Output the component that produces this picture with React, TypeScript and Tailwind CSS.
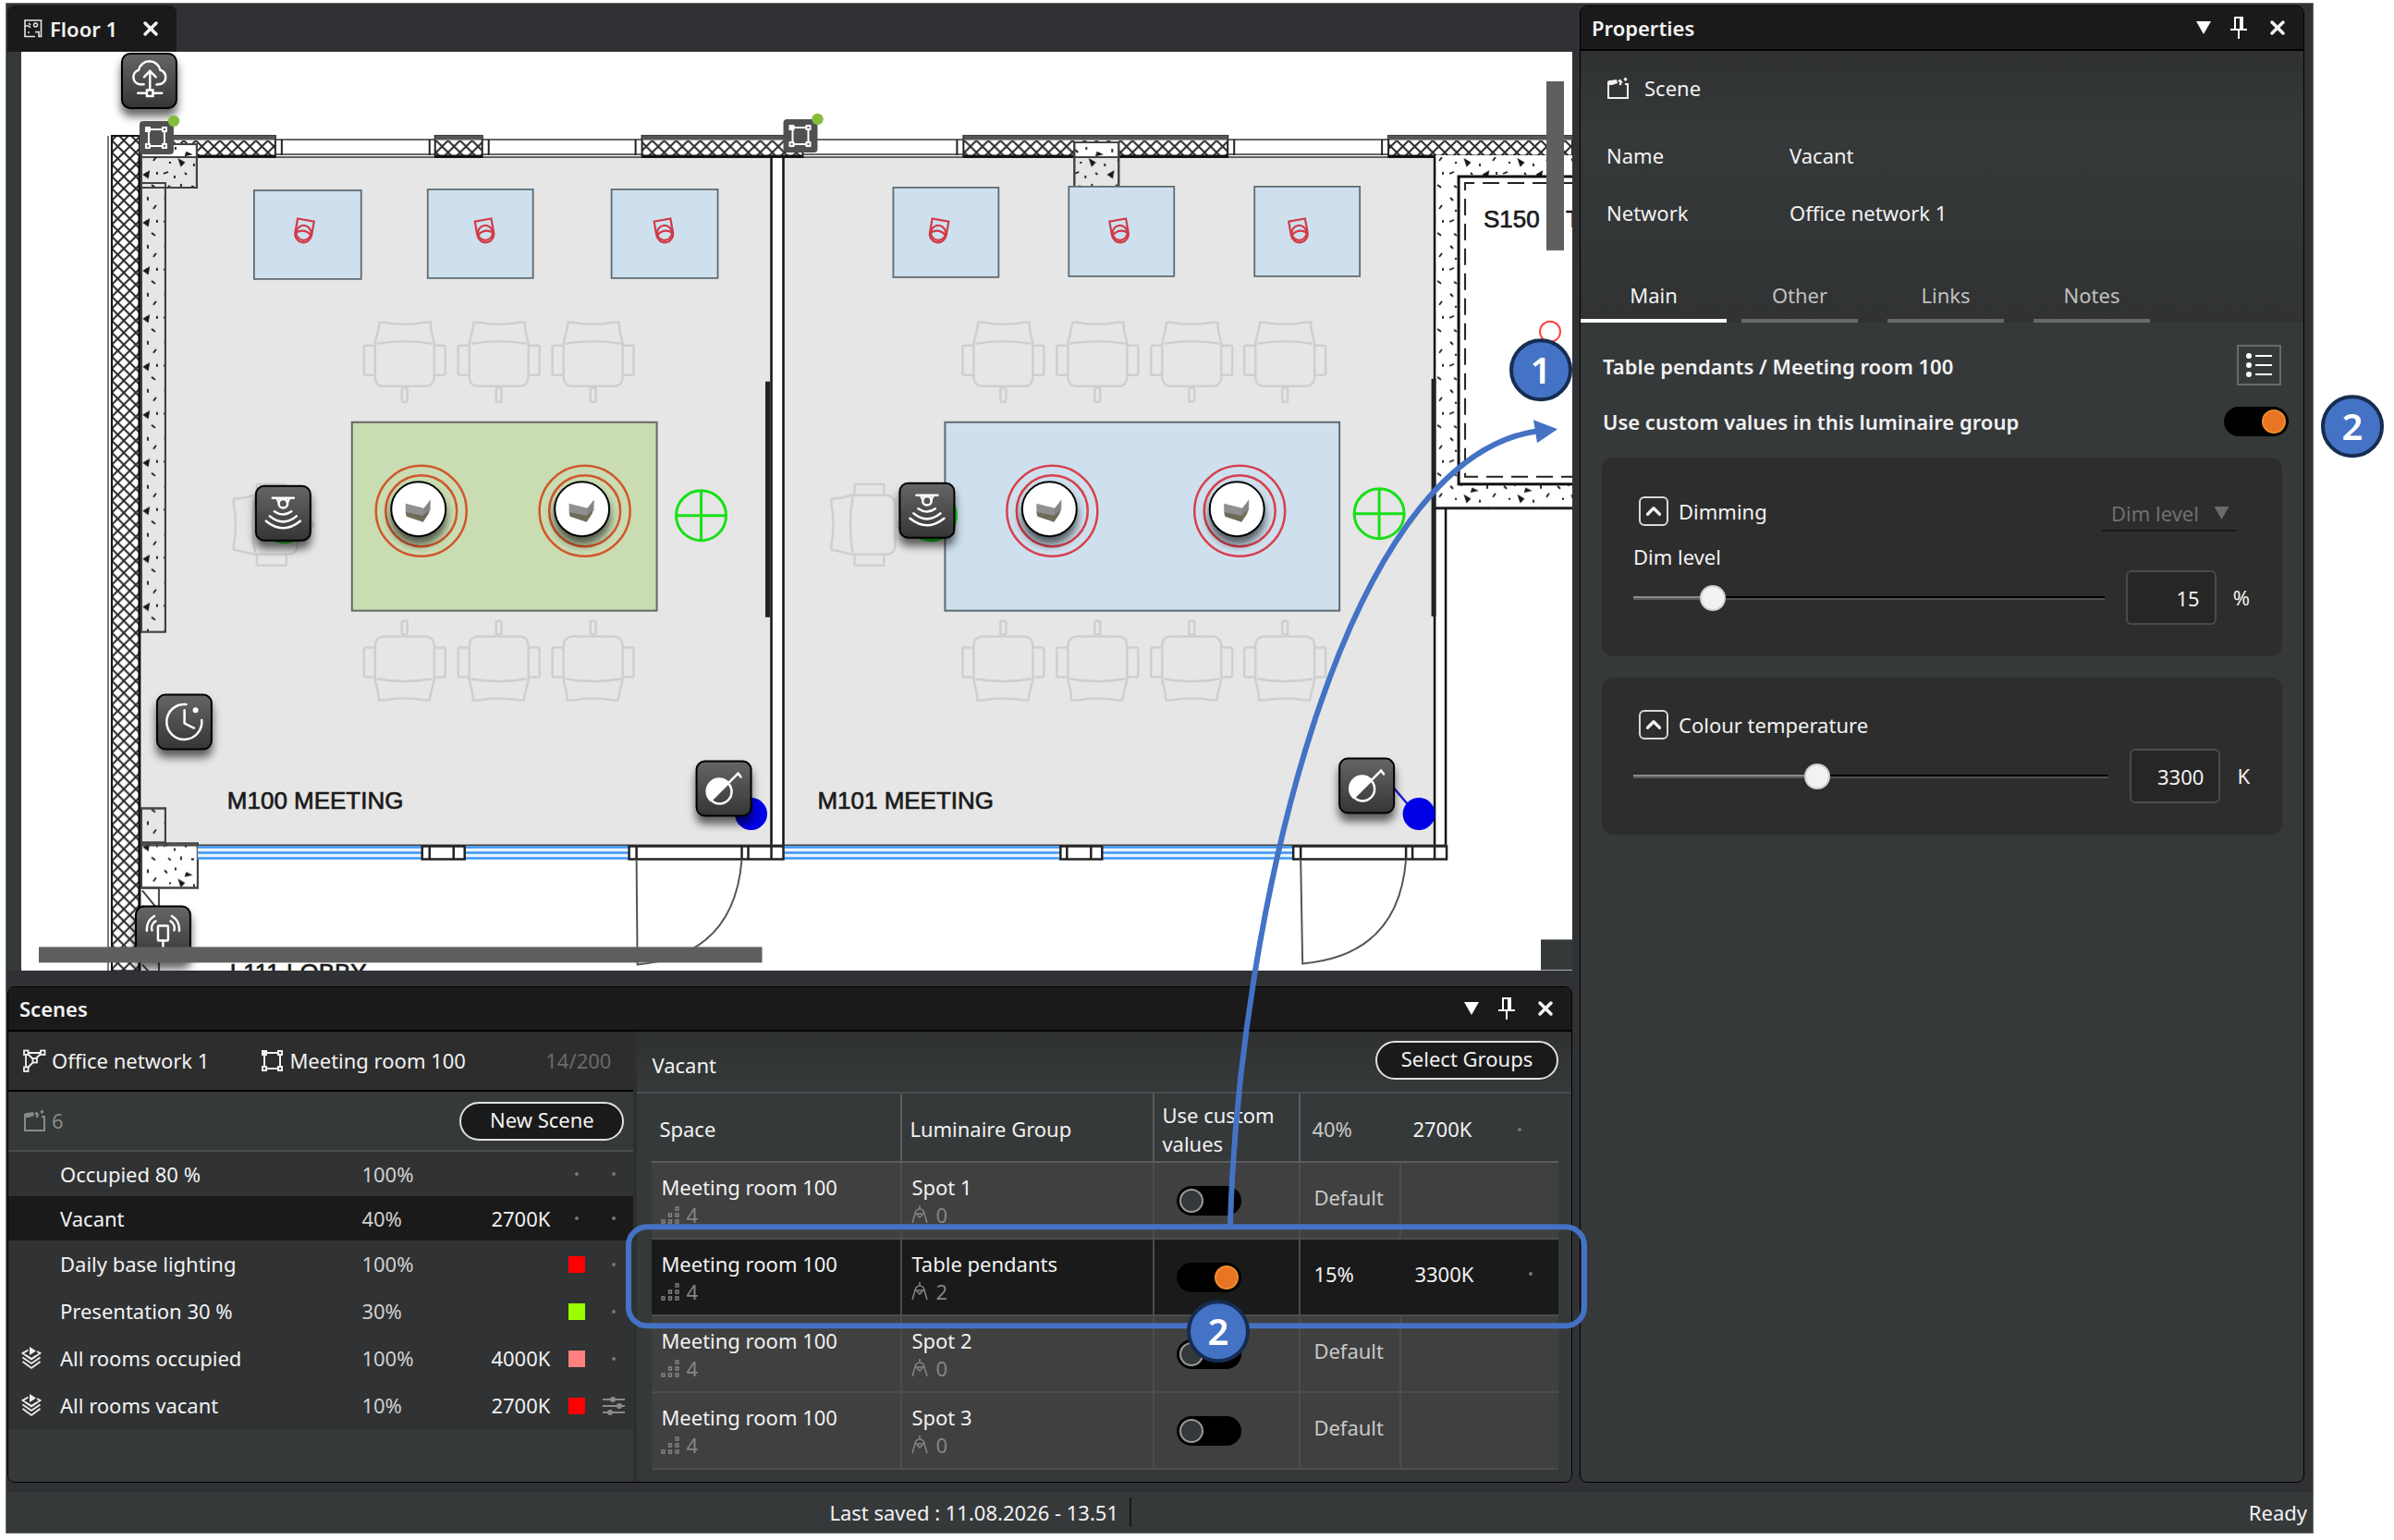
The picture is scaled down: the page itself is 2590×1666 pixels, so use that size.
import React, { useState } from "react";
import { ChevronUp, X } from "lucide-react";

type SceneRow = {
  name: string;
  dim: string;
  temp?: string;
  color?: string;
  shared?: boolean;
  tuned?: boolean;
  height: string;
};

const scenes: SceneRow[] = [
  { name: "Occupied 80 %", dim: "100%", height: "h-12" },
  { name: "Vacant", dim: "40%", temp: "2700K", height: "h-12" },
  { name: "Daily base lighting", dim: "100%", color: "bg-[#ff0000]", height: "h-[51px]" },
  { name: "Presentation 30 %", dim: "30%", color: "bg-[#99ff00]", height: "h-[51px]" },
  { name: "All rooms occupied", dim: "100%", temp: "4000K", color: "bg-[#ff8080]", shared: true, height: "h-[51px]" },
  { name: "All rooms vacant", dim: "10%", temp: "2700K", color: "bg-[#ff0000]", shared: true, tuned: true, height: "h-[51px]" },
];

const groups = [
  { name: "Spot 1", count: 0 },
  { name: "Table pendants", count: 2, dim: "15%", temp: "3300K" },
  { name: "Spot 2", count: 0 },
  { name: "Spot 3", count: 0 },
];

/* ---------- small icons ---------- */

function FloorIcon() {
  return (
    <svg width="20" height="20" viewBox="0 0 20 20" fill="none" stroke="#e8e8e8" strokeWidth="1.600">
      <path d="M12 18.500H1V1h17.500v17.500H16v-5h-3v1" />
      <path d="M1 7h4l2 2M5 4l2 2M5 13v2" strokeWidth="1.500" />
      <circle cx="12.500" cy="6" r="2" strokeWidth="1.500" />
    </svg>
  );
}

function PinIcon() {
  return (
    <svg width="20" height="26" viewBox="0 0 20 26" fill="none" stroke="white" strokeWidth="2">
      <path d="M6 15V2h8v13M1 15h18M10 15v10" />
      <path d="M12.500 2v13" strokeWidth="3" />
    </svg>
  );
}

function AreaIcon() {
  return (
    <svg width="25" height="25" viewBox="0 0 25 25" fill="none" stroke="currentColor" strokeWidth="2">
      <path d="M6 4h13M6 21h13M4 6v13M21 6v13" />
      <rect x="2" y="2" width="4" height="4" fill="currentColor" />
      <rect x="19" y="2" width="4" height="4" />
      <rect x="2" y="19" width="4" height="4" />
      <rect x="19" y="19" width="4" height="4" />
    </svg>
  );
}

function NetworkIcon() {
  return (
    <svg width="25" height="25" viewBox="0 0 25 25" fill="none" stroke="currentColor" strokeWidth="1.800">
      <path d="M5 4h14M3 6v13M19 5l-5 5M5 5l6 6M11 14l-6 6" />
      <rect x="1" y="1.500" width="4.500" height="4.500" />
      <rect x="19" y="1.500" width="4.500" height="4.500" />
      <rect x="10.500" y="10" width="4.500" height="4.500" />
      <rect x="1" y="19.500" width="4.500" height="4.500" />
    </svg>
  );
}

function SceneIcon() {
  return (
    <svg width="25" height="25" viewBox="0 0 25 25" fill="none" stroke="currentColor" strokeWidth="2">
      <path d="M2 6v17h21V8h-3" />
      <path d="M1 6q0-2 3-2l7-1 1 4-6 2H1z" fill="currentColor" stroke="none" />
      <path d="M13.500 3.500l3 3.500M19.500 1.500l2 2.500" strokeWidth="3" />
      <path d="M14 8.500l2-1" />
    </svg>
  );
}

function LayersIcon() {
  return (
    <svg width="22" height="25" viewBox="0 0 22 25" fill="none" stroke="#f0f0f0" strokeWidth="1.800">
      <path d="M7.500 3.500L1.500 7l9.500 6.500L20.500 7 17 5" />
      <path d="M1.500 11.500L11 18l9.500-6.500M1.500 16L11 23l9.500-7M5.500 9.500L11 13l5.500-3.500" />
      <path d="M9 0l7 4.500L9 9z" fill="#f0f0f0" stroke="none" />
    </svg>
  );
}

function TuneIcon() {
  return (
    <svg width="24" height="20" viewBox="0 0 24 20" stroke="#8a8a8a" strokeWidth="2" fill="#8a8a8a">
      <path d="M0 3h24M0 10h24M0 17h24" />
      <circle cx="11" cy="3" r="2" />
      <circle cx="18" cy="10" r="2" />
      <circle cx="8" cy="17" r="2" />
    </svg>
  );
}

function DevicesIcon() {
  return (
    <svg width="21" height="19" viewBox="0 0 21 19" fill="none" stroke="#858585" strokeWidth="1.300">
      <path d="M1 15h3v3H1zM8.500 15h3v3h-3zM16 15h3v3h-3zM8.500 8h3v3h-3zM16 8h3v3h-3zM16 1h3v3h-3z" />
    </svg>
  );
}

function PendantIcon() {
  return (
    <svg width="18" height="20" viewBox="0 0 18 20" fill="none" stroke="#858585" strokeWidth="1.500">
      <path d="M9 0v4M4 9a5 5 0 0 1 10 0zM4 9L1 19M14 9l3 10" />
      <path d="M6 10l3 3 3-3" />
    </svg>
  );
}

function ListIcon() {
  return (
    <svg width="30" height="26" viewBox="0 0 30 26" stroke="white" strokeWidth="2" fill="white">
      <path d="M11 3h18M11 13h18M11 23h18" />
      <circle cx="4" cy="3" r="2" />
      <circle cx="4" cy="13" r="2" />
      <circle cx="4" cy="23" r="2" />
    </svg>
  );
}

/* ---------- controls ---------- */

function Toggle({ label, defaultChecked }: { label: string; defaultChecked?: boolean }) {
  return (
    <input
      type="checkbox"
      role="switch"
      aria-label={label}
      defaultChecked={defaultChecked}
      className="block h-8 w-[70px] shrink-0 cursor-pointer appearance-none rounded-full bg-black p-[3px] before:block before:size-[26px] before:rounded-full before:border-2 before:border-[#9a9a9a] before:bg-[#33383a] checked:before:ml-auto checked:before:border-[#f08c2e] checked:before:bg-[#e87424]"
    />
  );
}

function Slider({ id, min, max, value, onChange }: { id: string; min: number; max: number; value: number; onChange: (v: number) => void }) {
  const filled = ((value - min) / (max - min)) * 100;
  return (
    <div className="relative flex h-8 flex-1 items-center">
      <div className="absolute inset-x-0 h-1 border-t-2 border-black bg-[#505050]" />
      <div className="absolute left-0 h-1 border-t-2 border-[#8a8a8a] bg-[#5a5a5a]" style={{ width: `${filled}%` }} />
      <input
        id={id}
        type="range"
        min={min}
        max={max}
        value={value}
        aria-label={id}
        onChange={(e) => onChange(Number(e.target.value))}
        className="relative h-8 w-full cursor-pointer appearance-none bg-transparent [&::-webkit-slider-thumb]:size-7 [&::-webkit-slider-thumb]:appearance-none [&::-webkit-slider-thumb]:rounded-full [&::-webkit-slider-thumb]:border-2 [&::-webkit-slider-thumb]:border-[#cfcfcf] [&::-webkit-slider-thumb]:bg-[#f2f2f2]"
      />
    </div>
  );
}

function NumberBox({ label, value, onChange }: { label: string; value: number; onChange: (v: number) => void }) {
  return (
    <input
      type="text"
      aria-label={label}
      value={value}
      onChange={(e) => onChange(Number(e.target.value) || 0)}
      className="h-[59px] w-[98px] rounded-md border-2 border-[#4b4b4b] bg-[#262626] pr-4 text-right"
    />
  );
}

function PanelHeader({ title }: { title: string }) {
  return (
    <header className="flex h-12 items-center border-b-2 border-black bg-[#1a1a1a] pr-4 pl-3">
      <h2 className="flex-1 text-[22px] font-semibold">{title}</h2>
      <button aria-label="Window menu" className="mr-5">
        <svg width="16" height="14" viewBox="0 0 16 14" fill="white">
          <path d="M0 0h16L8 14z" />
        </svg>
      </button>
      <button aria-label="Pin" className="mr-5">
        <PinIcon />
      </button>
      <button aria-label="Close">
        <X size={24} strokeWidth={3.5} />
      </button>
    </header>
  );
}

/* ---------- floor plan ---------- */

function Device({ x, y, children }: { x: number; y: number; children: React.ReactNode }) {
  return (
    <g transform={`translate(${x} ${y})`}>
      <rect x="1" y="1" width="59" height="59" rx="9" fill="url(#device)" stroke="black" strokeWidth="2" filter="url(#shadow)" />
      <g fill="none" stroke="white" strokeWidth="2.500" strokeLinecap="round">
        {children}
      </g>
    </g>
  );
}

function SensorGlyph() {
  return (
    <>
      <path d="M19 14h23M24 15l2 4M37 15l-2 4M21 28.500q9.500 6.500 18.500 0M16 33.700q14.500 12 29 0M12 39q18.500 15 37 0" />
      <circle cx="30.500" cy="20" r="4.800" />
    </>
  );
}

function SwitchGlyph() {
  return (
    <>
      <circle cx="26" cy="34" r="13" />
      <path d="M16 43A13 13 0 0 1 35 24z" fill="white" />
      <path d="M17 43L46 14l3 4" />
    </>
  );
}

function AreaMarker({ x, y }: { x: number; y: number }) {
  return (
    <g transform={`translate(${x} ${y})`}>
      <rect width="37" height="36" rx="4" fill="#505050" />
      <g fill="#505050" stroke="white" strokeWidth="2">
        <path d="M10 9h17v18H10z" />
        <rect x="7" y="7" width="4" height="4" fill="white" />
        <rect x="25" y="7" width="4" height="4" />
        <rect x="7" y="25" width="4" height="4" />
        <rect x="25" y="25" width="4" height="4" />
      </g>
      <circle cx="37" cy="0" r="6.200" fill="#86bc3c" />
    </g>
  );
}

function Chair({ x, y, rotate = 0 }: { x: number; y: number; rotate?: number }) {
  return (
    <g transform={`translate(${x} ${y}) rotate(${rotate})`} fill="#e6e6e6" stroke="#cfcfcf" strokeWidth="2.500">
      <rect x="-44" y="-17" width="13" height="32" rx="2" />
      <rect x="31" y="-17" width="13" height="32" rx="2" />
      <path d="M-27-42h5q22 4 44 0h6l1 10 3 12v38q-1 9-10 9h-44q-9 0-10-9v-38l3-12z" />
      <path d="M-30-19q30-5 60 0" fill="none" />
      <rect x="-3" y="29" width="6" height="15" rx="2" />
    </g>
  );
}

function Spot({ x, flip }: { x: number; flip?: boolean }) {
  return (
    <g transform={`translate(${x} 250) rotate(${flip ? -10 : 10})`} fill="none" stroke="#d23a48" strokeWidth="2.200">
      <path d="M-9 3v-15H9V3a9 9.500 0 0 1-18 0z" />
      <circle cx="0" cy="2" r="8" />
      <path d="M-8 3q8-6 16 0" />
    </g>
  );
}

function Luminaire({ x, y, color }: { x: number; y: number; color: string }) {
  return (
    <g transform={`translate(${x} ${y})`}>
      <circle cx="3" cy="2" r="49" fill="none" stroke={color} strokeWidth="2.500" />
      <circle cx="3" cy="2" r="38.500" fill="none" stroke={color} strokeWidth="2.500" />
      <circle r="29.500" fill="white" stroke="black" strokeWidth="2" filter="url(#shadow)" />
      <path d="M-14-6L6-1l7-9v11l-7 7-20-5z" fill="#909090" />
      <path d="M6-1l7-9-2 13-7 9z" fill="#858585" />
      <path d="M-14 3L5 7l7-6-1 4-6 9-18-6z" fill="#6f6a58" />
    </g>
  );
}

function Crosshair({ x, y }: { x: number; y: number }) {
  return (
    <g transform={`translate(${x} ${y})`} fill="none" stroke="#16e016" strokeWidth="3">
      <circle r="27" />
      <path d="M-27 0h54M0-27v54" />
    </g>
  );
}

function FloorPlan() {
  return (
    <svg
      viewBox="23 56 1679 995"
      className="block w-full bg-white"
      role="img"
      aria-label="Floor 1 plan"
      fontFamily='"Liberation Sans", sans-serif'
    >
      <defs>
        <pattern id="hatch" x="121" y="152" width="13" height="13" patternUnits="userSpaceOnUse">
          <path d="M0 0l13 13M13 0L0 13" stroke="#2a2a2a" strokeWidth="2" />
        </pattern>
        <pattern id="stone" width="58" height="52" patternUnits="userSpaceOnUse">
          <path
            d="M4 6l3 3M16 3v3M28 9l4 2-5 1zM44 5v4M53 14l-3 4M9 20h2M20 17l2 6 3-3zM36 21v3M3 32l5-2M15 34v3M26 31l2 2M40 33l5-3-1 6zM54 30v3M8 45l3 2M22 43v4M33 46h3M48 44l4 3"
            stroke="#161616"
            strokeWidth="1.800"
            fill="#161616"
          />
        </pattern>
        <linearGradient id="device" x1="0" y1="0" x2="0" y2="1">
          <stop offset="0" stopColor="#666" />
          <stop offset="1" stopColor="#353535" />
        </linearGradient>
        <filter id="shadow" x="-30%" y="-30%" width="160%" height="180%">
          <feDropShadow dx="0" dy="8" stdDeviation="5" floodOpacity="0.6" />
        </filter>
      </defs>

      {/* rooms */}
      <path d="M153 170h682v745H153zM848 170h705v745H848z" fill="#e6e6e6" />

      {/* outer walls */}
      <path d="M117 147v904" stroke="#777" strokeWidth="2" />
      <rect x="121" y="147" width="30" height="904" fill="url(#hatch)" stroke="#111" strokeWidth="2" />
      <path d="M151 170v881" stroke="#111" strokeWidth="3" />
      <path d="M298 151h1404M298 167h1404" stroke="#666" strokeWidth="2" />
      <path d="M298 170h1255" stroke="#333" strokeWidth="1.500" />
      {[
        [151, 147],
        [471, 51],
        [695, 174],
        [1043, 286],
        [1503, 199],
      ].map(([x, w]) => (
        <g key={x}>
          <rect x={x} y="147" width={w} height="23" fill="white" />
          <rect x={x} y="152" width={w} height="17" fill="url(#hatch)" />
          <rect x={x} y="147" width={w} height="23" fill="none" stroke="#222" strokeWidth="2" />
          <path d={`M${x} 149h${w}`} stroke="#555" strokeWidth="5" />
          <path d={`M${x} 169h${w}`} stroke="#111" strokeWidth="3" />
        </g>
      ))}
      <path d="M305 151v17M465 151v17M529 151v17M688 151v17M1036 151v17M1336 151v17M1496 151v17" stroke="#222" strokeWidth="2" />

      {/* stone columns */}
      <g stroke="#444" strokeWidth="2">
        <path d="M153 198h26v486h-26zM153 875h26v37h-26z" fill="#e6e6e6" />
        <path d="M153 170h60v33h-60zM1163 170h48v32h-48z" fill="#e6e6e6" />
        <path d="M153 156h60v14h-60zM1163 154h48v16h-48zM153 913h61v48h-61z" fill="white" />
        <path d="M153 198h26v486h-26zM153 875h26v37h-26zM153 156h60v47h-60zM153 913h61v48h-61zM1163 154h48v48h-48z" fill="url(#stone)" />
        <path d="M154 961h18v100M154 964l18 22M154 980l12 14M154 1044l18 20" fill="none" />
      </g>

      {/* shaft on the right */}
      <path d="M1554 168h148v381h-148z" fill="white" />
      <path d="M1554 170h148v21h-123v333h123v25h-148z" fill="url(#stone)" />
      <path d="M1704 191h-125v333h125" fill="none" stroke="#111" strokeWidth="3" />
      <path d="M1704 198h-118v318h118" fill="none" stroke="#222" strokeWidth="2" strokeDasharray="18 9" />
      <path d="M1553 550h149" stroke="#222" strokeWidth="3" />
      <path d="M835 170v760M848 170v760M1553 170v760M1565 550v380" stroke="#111" strokeWidth="2.500" />
      <path d="M831 413v255M1552 410v257" stroke="#222" strokeWidth="5" />

      {/* glazing and doors */}
      <path d="M153 915h1413" stroke="#444" strokeWidth="2" />
      <rect x="214" y="916" width="635" height="14" fill="#e8f3ff" />
      <rect x="849" y="916" width="716" height="14" fill="#e8f3ff" />
      <path d="M214 917h467M214 923h467M214 929h467M849 917h551M849 923h551M849 929h551" stroke="#3c96f5" strokeWidth="2.500" />
      <path
        d="M457 916h46v14h-46zM465 916v14M491 916v14M681 916h167v14h-167zM689 916v14M803 916v14M810 916v14M835 916v14M1148 916h45v14h-45zM1155 916v14M1181 916v14M1400 916h166v14h-166zM1408 916v14M1522 916v14M1529 916v14M1553 916v14"
        fill="white"
        stroke="#222"
        strokeWidth="2.500"
      />
      <path d="M689 930l1 114q105-9 113-114M1408 930l2 113q104-9 112-113" fill="none" stroke="#555" strokeWidth="2" />

      {/* furniture */}
      <g fill="#cee0ed" stroke="#5f6a72" strokeWidth="1.800">
        <path d="M275 206h116v96H275zM463 205h114v96H463zM662 205h115v96H662zM967 203h114v97H967zM1157 202h114v97h-114zM1358 202h114v97h-114z" />
      </g>
      {[438, 540, 642, 1086, 1188, 1290, 1391].map((x) => (
        <React.Fragment key={x}>
          <Chair x={x} y={391} />
          <Chair x={x} y={716} rotate={180} />
        </React.Fragment>
      ))}
      <Chair x={295} y={568} rotate={-90} />
      <Chair x={942} y={568} rotate={-90} />
      <rect x="381" y="457" width="330" height="204" fill="#c9dcb2" stroke="#666" strokeWidth="2" />
      <rect x="1023" y="457" width="427" height="204" fill="#cee0ed" stroke="#5f6a72" strokeWidth="2" />
      <Spot x={329} />
      <Spot x={525} flip />
      <Spot x={719} flip />
      <Spot x={1016} />
      <Spot x={1212} flip />
      <Spot x={1406} flip />

      <g fontSize="26" fill="#1a1a1a" stroke="#1a1a1a" strokeWidth="0.700">
        <text x="246" y="875">M100 MEETING</text>
        <text x="885" y="875">M101 MEETING</text>
        <text x="1606" y="246">S150</text>
        <text x="1695" y="246">T</text>
        <text x="249" y="1062">L111 LOBBY</text>
      </g>

      <Luminaire x={453} y={551} color="#d2562b" />
      <Luminaire x={630} y={551} color="#d2562b" />
      <Luminaire x={1136} y={551} color="#d8404e" />
      <Luminaire x={1339} y={551} color="#d8404e" />
      <Crosshair x={759} y={558} />
      <Crosshair x={1493} y={556} />
      <Crosshair x={308} y={560} />
      <Crosshair x={1008} y={558} />
      <circle cx="1678" cy="359" r="11" fill="none" stroke="#ff4040" strokeWidth="2" />
      <path d="M1508 852l24 28" stroke="#1c1cd8" strokeWidth="2.500" />
      <circle cx="813" cy="881" r="17.500" fill="#0000e6" />
      <circle cx="1536" cy="881" r="17.500" fill="#0000e6" />

      {/* devices */}
      <Device x={131} y={57}>
        <path d="M24.700 34.300H20a8 8 0 0 1-1-15.500 12 12 0 0 1 23.500 0 8 8 0 0 1 1 15l-5 .8" />
        <path d="M31.300 39.700v-20M25 26.300l6.300-6.600 6.400 6.600M18.300 43.700h9.400M35 43.700h9.300" />
        <rect x="28" y="40.500" width="6.500" height="6.500" />
      </Device>
      <Device x={276} y={525}>
        <SensorGlyph />
      </Device>
      <Device x={973} y={522}>
        <SensorGlyph />
      </Device>
      <Device x={169} y={751}>
        <path d="M32.500 11.500A19 19 0 1 0 49.300 28.500" />
        <path d="M30.700 17.700V32l10.300 5" />
        <circle cx="42.700" cy="17.700" r="1.800" fill="white" />
      </Device>
      <Device x={753} y={823}>
        <SwitchGlyph />
      </Device>
      <Device x={1449} y={820}>
        <SwitchGlyph />
      </Device>
      <Device x={146} y={980}>
        <rect x="25" y="22" width="11" height="16" rx="1" />
        <path d="M30.500 38v7M22.500 17a9 9 0 0 0-4 10M21 11.500a17 17 0 0 0-8 16M38.500 17a9 9 0 0 1 4 10M40 11.500a17 17 0 0 1 8 16" />
      </Device>
      <AreaMarker x={151} y={131} />
      <AreaMarker x={848} y={129} />

      {/* scroll bars */}
      <rect x="42" y="1025" width="783" height="17" fill="#5f5f5f" />
      <rect x="1674" y="88" width="19" height="183" fill="#5f5f5f" />
      <rect x="1668" y="1017" width="34" height="33" fill="#36393a" />
    </svg>
  );
}

/* ---------- panels ---------- */

function ScenesPanel() {
  const [selected, setSelected] = useState("Vacant");

  return (
    <section className="mt-[17px] overflow-hidden rounded-lg border border-black bg-[#36393a]">
      <PanelHeader title="Scenes" />
      <div className="flex gap-1 bg-[#2d2f30]">
        <div className="w-2/5 bg-[#36393a]">
          <div className="flex h-[65px] items-center border-b-2 border-black bg-[#2d2d2d] pr-6 pl-4">
            <NetworkIcon />
            <span className="ml-1.5">Office network 1</span>
            <span className="ml-14 flex flex-1 items-center gap-1.5">
              <AreaIcon />
              Meeting room 100
            </span>
            <span className="text-[#6a6a6a]">14/200</span>
          </div>
          <div className="flex h-[65px] items-center border-b-2 border-[#4a4c4e] pr-2.5 pl-4 text-[#8a8a8a]">
            <SceneIcon />
            <span className="ml-1.5 flex-1">6</span>
            <button className="h-[42px] w-[178px] rounded-full border-2 border-[#e0e0e0] bg-[#1a1a1a] pb-0.5 text-[22px] text-[#f2f2f2]">
              New Scene
            </button>
          </div>
          <ul className="bg-[#303233]">
            {scenes.map((s) => (
              <li key={s.name}>
                <button
                  onClick={() => setSelected(s.name)}
                  className={`flex w-full items-center text-left ${s.height} ${selected === s.name ? "bg-[#1a1a1a]" : ""}`}
                >
                  <span className="w-14 pl-3.5">{s.shared && <LayersIcon />}</span>
                  <span className="flex-1">{s.name}</span>
                  <span className="w-[120px] text-[#d0d0d0]">{s.dim}</span>
                  <span className="w-[84px] text-right">{s.temp}</span>
                  <span className="flex w-[58px] justify-center">
                    {s.color ? <i className={`size-[18px] ${s.color}`} /> : <i className="size-1 rounded-full bg-[#777]" />}
                  </span>
                  <span className="flex w-8 justify-center pr-2.5">
                    {s.tuned ? (
                      <span className="shrink-0">
                        <TuneIcon />
                      </span>
                    ) : (
                      <i className="size-1 rounded-full bg-[#777]" />
                    )}
                  </span>
                </button>
              </li>
            ))}
          </ul>
        </div>

        <div className="flex-1 bg-[#36393a] pb-[13px]">
          <div className="flex h-[67px] items-center border-b-2 border-[#4a4c4e] bg-linear-to-b from-[#2f3131] to-[#36393a] pr-3.5 pl-4">
            <span className="flex-1 pt-2">Vacant</span>
            <button className="mb-1 h-[42px] w-[198px] rounded-full border-2 border-[#e0e0e0] bg-[#1a1a1a] pb-0.5 text-[22px]">
              Select Groups
            </button>
          </div>
          <div className="pr-3.5 pl-4">
            <table className="w-full table-fixed border-separate border-spacing-0 text-left">
              <colgroup>
                <col className="w-[271px]" />
                <col className="w-[273px]" />
                <col className="w-[158px]" />
                <col className="w-[109px]" />
                <col />
              </colgroup>
              <thead>
                <tr className="h-[75px] *:border-b-2 *:border-[#5a5c5e] *:p-0 *:font-normal">
                  <th className="border-r-2">
                    <span className="block pt-1 pl-2">Space</span>
                  </th>
                  <th className="border-r-2">
                    <span className="block pt-1 pl-2">Luminaire Group</span>
                  </th>
                  <th className="border-r-2">
                    <span className="block pt-1 pl-2 leading-[31px]">Use custom values</span>
                  </th>
                  <th className="text-[#c8c8c8]">
                    <span className="block pt-1 pl-3">40%</span>
                  </th>
                  <th>
                    <span className="flex items-center justify-between pt-1 pr-10 pl-3">
                      2700K
                      <i className="size-1 rounded-full bg-[#777]" />
                    </span>
                  </th>
                </tr>
              </thead>
              <tbody>
                {groups.map((g) => (
                  <tr
                    key={g.name}
                    className={`h-[83px] *:border-b-2 *:border-[#4c4c4c] *:p-0 *:align-top ${g.dim ? "bg-[#1a1a1a]" : "bg-[#404040]"}`}
                  >
                    <td className="border-r-2">
                      <div className="pt-[11px] pl-2.5 leading-[30px]">Meeting room 100</div>
                      <div className="flex items-center gap-1.5 pl-2.5 leading-[30px] text-[#858585]">
                        <DevicesIcon />4
                      </div>
                    </td>
                    <td className="border-r-2">
                      <div className="pt-[11px] pl-2.5 leading-[30px]">{g.name}</div>
                      <div className="flex items-center gap-2 pl-2.5 leading-[30px] text-[#858585]">
                        <PendantIcon />
                        {g.count}
                      </div>
                    </td>
                    <td className="border-r-2">
                      <div className="pt-[25px] pl-6">
                        <Toggle label={`Use custom values in ${g.name}`} defaultChecked={!!g.dim} />
                      </div>
                    </td>
                    <td className={g.dim ? "" : "border-r-2 text-[#c8c8c8]"}>
                      <div className="pt-[22px] pl-3.5 leading-[30px]">{g.dim ?? "Default"}</div>
                    </td>
                    <td>
                      {g.temp && (
                        <div className="flex items-center justify-between pt-[22px] pr-7 pl-3.5 leading-[30px]">
                          {g.temp}
                          <i className="size-1 rounded-full bg-[#777]" />
                        </div>
                      )}
                    </td>
                  </tr>
                ))}
              </tbody>
            </table>
          </div>
        </div>
      </div>
    </section>
  );
}

function PropertiesPanel() {
  const [tab, setTab] = useState("Main");
  const [dim, setDim] = useState(15);
  const [temp, setTemp] = useState(3300);

  return (
    <aside className="w-[784px] shrink-0 overflow-hidden rounded-lg border border-black bg-[#36393a]">
      <PanelHeader title="Properties" />
      <div className="bg-linear-to-b from-[#2f3131] via-[#36393a] via-30% to-[#303233]">
        <div className="px-7 pt-[25px]">
          <div className="flex h-[30px] items-center gap-4">
            <SceneIcon />
            Scene
          </div>
          <dl className="mt-[43px] grid grid-cols-[198px_1fr] gap-y-8 leading-[30px]">
            <dt>Name</dt>
            <dd>Vacant</dd>
            <dt>Network</dt>
            <dd>Office network 1</dd>
          </dl>
        </div>
        <nav className="mt-[59px] flex leading-[30px]">
          {["Main", "Other", "Links", "Notes"].map((t) => (
            <button
              key={t}
              onClick={() => setTab(t)}
              className={
                tab === t
                  ? "w-[158px] border-b-4 border-white pb-[11px]"
                  : "mx-4 w-[126px] border-b-4 border-[#6a6a6a] pb-[11px] text-[#c0c0c0]"
              }
            >
              {t}
            </button>
          ))}
        </nav>
      </div>

      <div className="flex h-[68px] items-end justify-between px-6 text-[22px] font-semibold">
        <h3 className="pb-1">Table pendants / Meeting room 100</h3>
        <button aria-label="Show list" className="flex h-11 w-12 items-center justify-center border-2 border-[#6a6a6a]">
          <ListIcon />
        </button>
      </div>
      <div className="mt-[23px] flex h-8 items-center justify-between pr-4 pl-6 text-[22px] font-semibold">
        Use custom values in this luminaire group
        <Toggle label="Use custom values in this luminaire group" defaultChecked />
      </div>

      <div className="mx-[23px] mt-[23px] rounded-xl bg-[#2d2d2d] pt-[42px] pr-[35px] pb-[34px] pl-[34px]">
        <div className="flex h-8 items-center gap-[11px] pr-3.5 pl-1.5">
          <button aria-label="Collapse dimming" className="flex size-8 items-center justify-center rounded-md border-2 border-[#d8d8d8]">
            <ChevronUp size={26} strokeWidth={3} />
          </button>
          <span className="flex-1">Dimming</span>
          <div className="relative flex h-[38px] w-[146px] items-center self-start border-b-2 border-[#1a1a1a]">
            <select aria-label="Dimming mode" disabled className="w-full appearance-none pl-2.5 text-[#707070]">
              <option>Dim level</option>
            </select>
            <svg width="17" height="14" viewBox="0 0 16 14" className="absolute right-2" fill="#6a6a6a">
              <path d="M0 0h16L8 14z" />
            </svg>
          </div>
        </div>
        <label htmlFor="dim-level" className="mt-[18px] block leading-[30px]">
          Dim level
        </label>
        <div className="flex items-center">
          <Slider id="dim-level" min={0} max={100} value={dim} onChange={setDim} />
          <span className="w-[23px]" />
          <NumberBox label="Dim level in percent" value={dim} onChange={setDim} />
          <span className="pl-[18px]">%</span>
        </div>
      </div>

      <div className="mx-[23px] mt-[23px] rounded-xl bg-[#2d2d2d] pt-[35px] pr-[35px] pb-[34px] pl-[34px]">
        <div className="flex h-8 items-center gap-[11px] pl-1.5">
          <button aria-label="Collapse colour temperature" className="flex size-8 items-center justify-center rounded-md border-2 border-[#d8d8d8]">
            <ChevronUp size={26} strokeWidth={3} />
          </button>
          <span>Colour temperature</span>
        </div>
        <div className="mt-2.5 flex items-center">
          <Slider id="colour-temperature" min={2500} max={4600} value={temp} onChange={setTemp} />
          <span className="w-[23px]" />
          <NumberBox label="Colour temperature in kelvin" value={temp} onChange={setTemp} />
          <span className="pl-[18px]">K</span>
        </div>
      </div>
    </aside>
  );
}

/* Numbered callouts that link the selected row to the properties */
function Callouts() {
  return (
    <svg
      viewBox="0 0 2590 1666"
      className="pointer-events-none absolute inset-0 h-full w-full"
      fontFamily='"Noto Sans", "Open Sans", sans-serif'
      fontWeight="600"
      textAnchor="middle"
    >
      <g fill="none" stroke="#4472c4" strokeWidth="6">
        <rect x="680" y="1327" width="1034" height="107" rx="20" />
        <path d="M1331 1325C1340 1000 1450 495 1664 466" />
      </g>
      <path d="M1685 464l-26-10 4 25z" fill="#4472c4" />
      <g fill="#4472c4" stroke="#172c51" strokeWidth="4">
        <circle cx="1667" cy="400" r="32" />
        <circle cx="1318" cy="1440" r="32" />
        <circle cx="2545" cy="461" r="32" />
      </g>
      <g fill="white" fontSize="40">
        <text x="1667" y="415">1</text>
        <text x="1318" y="1455">2</text>
        <text x="2545" y="476">2</text>
      </g>
    </svg>
  );
}

export default function App() {
  return (
    <div className='relative min-h-screen bg-white pt-[3px] pr-[87px] pb-[7px] pl-1.5 font-["Noto_Sans","Open_Sans",sans-serif] text-[22px] text-[#f2f2f2]'>
      <div className="border border-[#6b6b6b] bg-[#303134]">
        <main className="flex gap-2 pt-0.5 pr-[9px] pl-px">
          <div className="min-w-0 flex-1">
            <div className="flex">
              <div className="flex h-[50px] items-center rounded-t-lg bg-[#1a1a1a] pr-4 pl-[18px]">
                <FloorIcon />
                <a href="#floor-1" className="mr-6 ml-2 font-semibold">
                  Floor 1
                </a>
                <button aria-label="Close tab">
                  <X size={24} strokeWidth={3.5} />
                </button>
              </div>
            </div>
            <div className="bg-[#36393a] pl-[15px]">
              <FloorPlan />
            </div>
            <ScenesPanel />
          </div>
          <PropertiesPanel />
        </main>
        <footer className="mt-2.5 flex h-11 items-center bg-[#36393a] pr-1.5">
          <div className="flex h-8 w-[1217px] items-center justify-end border-r-2 border-[#1a1a1a] pr-3">
            Last saved : 11.08.2026 - 13.51
          </div>
          <span className="ml-auto">Ready</span>
        </footer>
      </div>
      <Callouts />
    </div>
  );
}
